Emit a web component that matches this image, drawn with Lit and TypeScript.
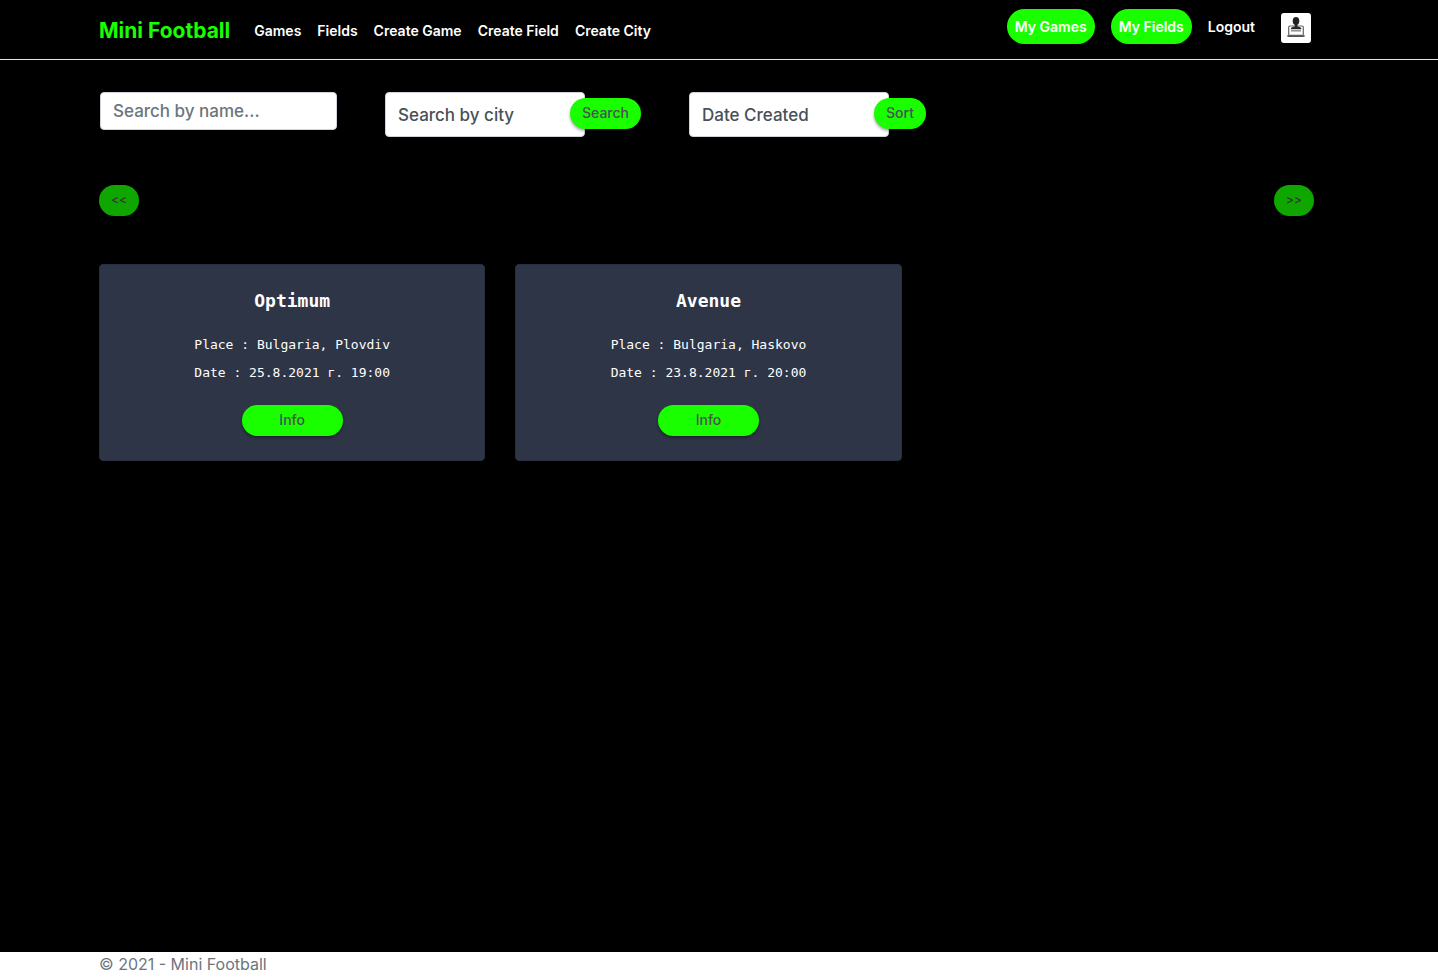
import { LitElement, html, css } from "lit";
import { customElement, property, state } from "lit/decorators.js";

interface Game {
  name: string;
  place: string;
  date: string;
}

@customElement("game-card")
class GameCard extends LitElement {
  @property({ attribute: false }) game!: Game;

  static styles = css`
    :host {
      display: block;
    }
    .card {
      box-sizing: border-box;
      display: flex;
      flex-direction: column;
      align-items: center;
      padding: 24px;
      border: 1px solid #272e3d;
      border-radius: 4px;
      background: #2e3547;
      color: #fff;
      font-family: "DejaVu Sans Mono", monospace;
    }
    .title {
      margin: 0 0 18px;
      font-size: 18px;
      font-weight: 700;
      line-height: 24px;
    }
    .line {
      margin: 0;
      font-size: 13px;
      line-height: 28px;
    }
    .info {
      width: 101px;
      height: 31px;
      margin-top: 18px;
      padding: 0 0 2px;
      border: 0;
      border-radius: 16px;
      background: #19ff00;
      color: #495057;
      font: 500 14px/28px Inter, sans-serif;
      box-shadow: 0 2px 3px rgba(0, 0, 0, 0.35);
    }
  `;

  render() {
    return html`
      <article class="card">
        <h2 class="title">${this.game.name}</h2>
        <p class="line">Place : ${this.game.place}</p>
        <p class="line">Date : ${this.game.date}</p>
        <button class="info" type="button">Info</button>
      </article>
    `;
  }
}

@customElement("app-root")
class AppRoot extends LitElement {
  @state() private games: Game[] = [
    { name: "Optimum", place: "Bulgaria, Plovdiv", date: "25.8.2021 г. 19:00" },
    { name: "Avenue", place: "Bulgaria, Haskovo", date: "23.8.2021 г. 20:00" },
  ];

  private links = ["Games", "Fields", "Create Game", "Create Field", "Create City"];

  static styles = css`
    :host {
      display: flex;
      flex-direction: column;
      min-height: 100vh;
      background: #000;
      font-family: Inter, sans-serif;
    }
    .header {
      border-bottom: 1px solid #e5e5e5;
    }
    .nav {
      display: flex;
      align-items: flex-start;
      justify-content: space-between;
      height: 59px;
      padding: 0 127px 0 99px;
    }
    .group {
      display: flex;
      align-items: center;
      gap: 16px;
    }
    .main-links {
      height: 60px;
    }
    .account {
      padding-top: 9px;
    }
    .brand {
      margin-right: 8px;
      color: #19ff00;
      font-size: 21px;
      font-weight: 700;
      text-decoration: none;
      white-space: nowrap;
    }
    .link {
      color: #fff;
      font-size: 14px;
      font-weight: 600;
      text-decoration: none;
      white-space: nowrap;
    }
    .pill {
      padding: 0 8px;
      border-radius: 18px;
      background: #19ff00;
      line-height: 35px;
    }
    .avatar {
      display: block;
      width: 30px;
      height: 30px;
      margin: 2px 0 0 10px;
      border-radius: 3px;
      background: #fff;
    }
    .page {
      flex: 1;
      padding: 32px 120px 32px 99px;
    }
    .filters {
      display: flex;
      align-items: flex-start;
      gap: 48px;
      padding-left: 1px;
    }
    .control {
      box-sizing: border-box;
      appearance: none;
      margin: 0;
      padding: 0 12px;
      border: 1px solid #ced4da;
      border-radius: 4px;
      background: #fff;
      color: #495057;
      font: 500 17px/24px Inter, sans-serif;
    }
    .name {
      width: 237px;
      height: 38px;
    }
    .name::placeholder {
      color: #6c757d;
      opacity: 1;
    }
    .choice {
      width: 200px;
      height: 45px;
    }
    .combo {
      display: flex;
      align-items: flex-start;
    }
    .button {
      height: 31px;
      padding: 0 12px 2px;
      border: 0;
      border-radius: 16px;
      background: #19ff00;
      color: #495057;
      font: 500 14px/28px Inter, sans-serif;
      box-shadow: 0 2px 3px rgba(0, 0, 0, 0.35);
    }
    .button:disabled {
      opacity: 0.65;
    }
    .attached {
      margin: 6px 0 0 -15px;
      z-index: 1;
    }
    .pager {
      display: flex;
      justify-content: space-between;
      padding: 48px 4px 48px 0;
    }
    .step {
      width: 40px;
      padding: 0 0 2px;
      font-size: 12px;
    }
    .cards {
      display: grid;
      grid-template-columns: repeat(3, 1fr);
      gap: 30px;
    }
    .footer {
      padding: 0 99px 2px;
      background: #fff;
      color: #6c757d;
      font-size: 16px;
      font-weight: 400;
      line-height: 24px;
    }
  `;

  render() {
    return html`
      <header class="header">
        <nav class="nav">
          <div class="group main-links">
            <a class="brand" href="#">Mini Football</a>
            ${this.links.map((text) => html`<a class="link" href="#">${text}</a>`)}
          </div>
          <div class="group account">
            <a class="link pill" href="#">My Games</a>
            <a class="link pill" href="#">My Fields</a>
            <a class="link" href="#">Logout</a>
            <a class="avatar" href="#" aria-label="Profile">
              <svg viewBox="0 0 30 30" width="30" height="30" aria-hidden="true">
                <rect x="7.700" y="13" width="14.600" height="9.300" rx="1" fill="#fff" stroke="#666" stroke-width="1.200" />
                <path d="M6 22.300h18l-.8 1.700H6.800z" fill="#555" />
                <path d="M9.700 16.200q0-1.700 2-2.100l2.100-.6V11h2.600v2.500l2.100.6q2 .4 2 2.100z" fill="#292929" />
                <ellipse cx="15" cy="8" rx="3.300" ry="4" fill="#222" />
                <path d="M10 17.800h10" stroke="#999" stroke-width="1.600" />
              </svg>
            </a>
          </div>
        </nav>
      </header>
      <main class="page">
        <form class="filters">
          <input class="control name" type="text" placeholder="Search by name..." aria-label="Search by name" />
          <div class="combo">
            <select class="control choice" aria-label="City">
              <option>Search by city</option>
            </select>
            <button class="button attached" type="button">Search</button>
          </div>
          <div class="combo">
            <select class="control choice" aria-label="Sort order">
              <option>Date Created</option>
            </select>
            <button class="button attached" type="button">Sort</button>
          </div>
        </form>
        <div class="pager">
          <button class="button step" type="button" disabled aria-label="Previous page">&lt;&lt;</button>
          <button class="button step" type="button" disabled aria-label="Next page">&gt;&gt;</button>
        </div>
        <section class="cards">
          ${this.games.map((game) => html`<game-card .game=${game}></game-card>`)}
        </section>
      </main>
      <footer class="footer">© 2021 - Mini Football</footer>
    `;
  }
}
